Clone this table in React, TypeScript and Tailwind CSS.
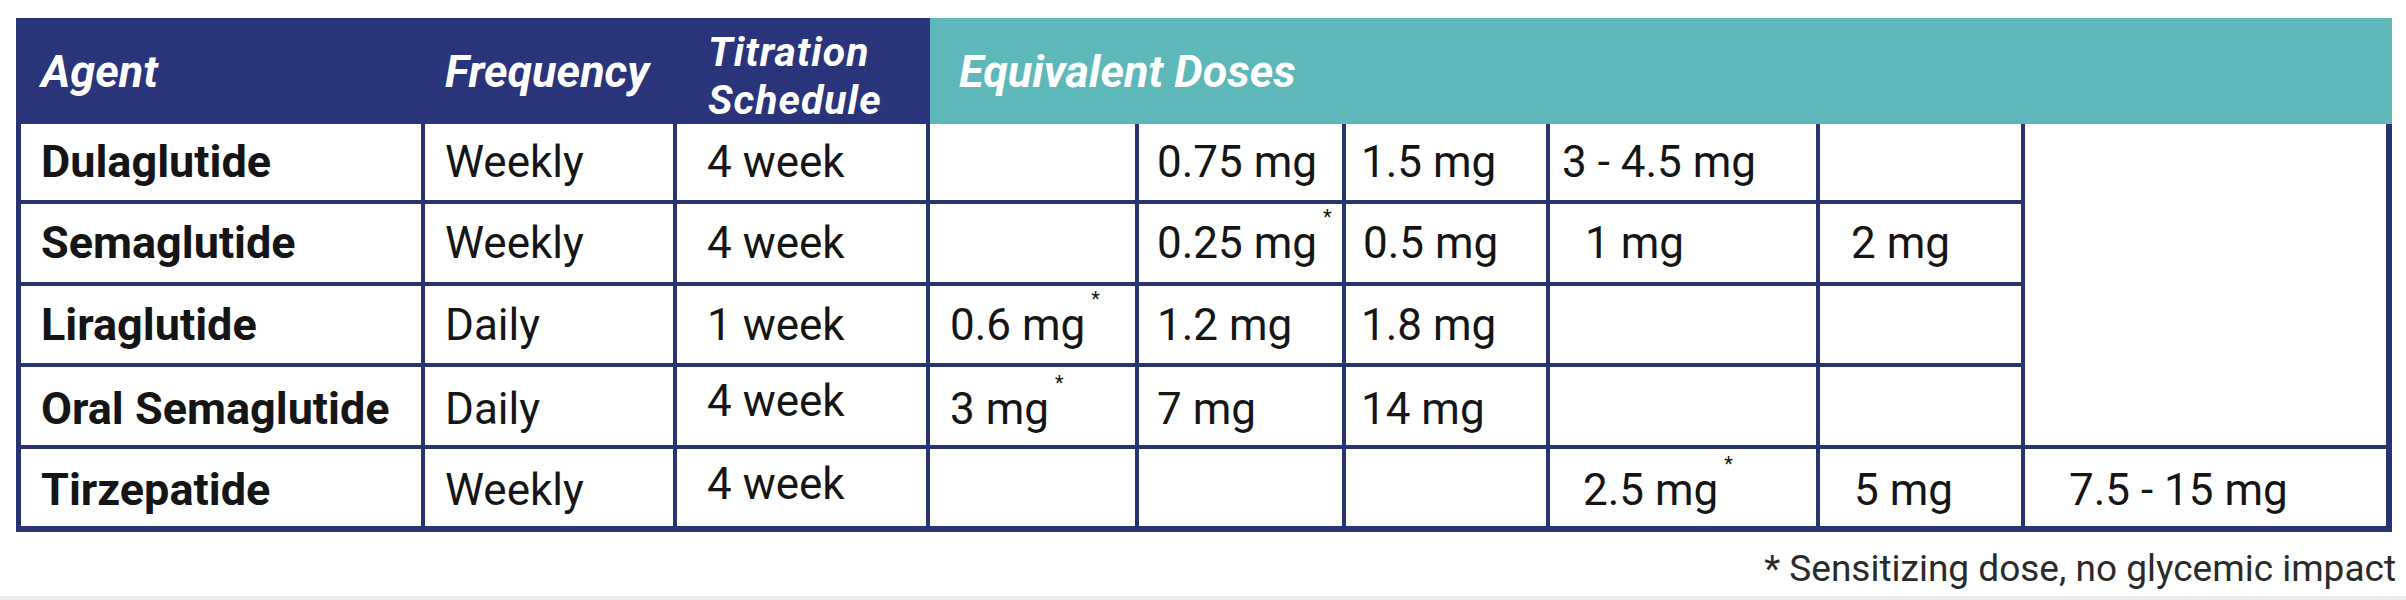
/**
 * GLP-1 agent dosing table - equivalent doses across agents
 */

type Dose = { text: string; star?: boolean; pad?: string }

type AgentRow = {
  agent: string
  frequency: string
  titration: string
  titrationShift?: string
  shift?: string
  doses: Dose[]
}

const rows: AgentRow[] = [
  {
    agent: 'Dulaglutide',
    frequency: 'Weekly',
    titration: '4 week',
    doses: [
      { text: '' },
      { text: '0.75 mg', pad: 'pl-[18px]' },
      { text: '1.5 mg', pad: 'pl-[15px]' },
      { text: '3 - 4.5 mg', pad: 'pl-[12px]' },
      { text: '' },
    ],
  },
  {
    agent: 'Semaglutide',
    frequency: 'Weekly',
    titration: '4 week',
    doses: [
      { text: '' },
      { text: '0.25 mg', star: true, pad: 'pl-[18px]' },
      { text: '0.5 mg', pad: 'pl-[17px]' },
      { text: '1 mg', pad: 'pl-[35px]' },
      { text: '2 mg', pad: 'pl-[31px]' },
    ],
  },
  {
    agent: 'Liraglutide',
    frequency: 'Daily',
    titration: '1 week',
    doses: [
      { text: '0.6 mg', star: true, pad: 'pl-[20px]' },
      { text: '1.2 mg', pad: 'pl-[18px]' },
      { text: '1.8 mg', pad: 'pl-[15px]' },
      { text: '' },
      { text: '' },
    ],
  },
  {
    agent: 'Oral Semaglutide',
    frequency: 'Daily',
    titration: '4 week',
    titrationShift: 'pb-[10px]',
    shift: 'pt-[6px]',
    doses: [
      { text: '3 mg', star: true, pad: 'pl-[20px]' },
      { text: '7 mg', pad: 'pl-[18px]' },
      { text: '14 mg', pad: 'pl-[15px]' },
      { text: '' },
      { text: '' },
    ],
  },
  {
    agent: 'Tirzepatide',
    frequency: 'Weekly',
    titration: '4 week',
    titrationShift: 'pb-[8px]',
    shift: 'pt-[4px]',
    doses: [
      { text: '' },
      { text: '' },
      { text: '' },
      { text: '2.5 mg', star: true, pad: 'pl-[33px]' },
      { text: '5 mg', pad: 'pl-[34px]' },
    ],
  },
]

function Star() {
  return <span className="relative -top-[26px] ml-[6px] text-[20px] leading-none">*</span>
}

function Cell({
  last,
  first,
  className = '',
  children,
}: {
  last: boolean
  first?: boolean
  className?: string
  children?: React.ReactNode
}) {
  const bottom = last ? 'border-b-[6px]' : 'border-b-[4px]'
  const left = first ? 'border-l-[5px]' : ''
  return (
    <div className={`flex items-center border-r-[4px] border-[#29336f] bg-white ${bottom} ${left} ${className}`}>
      {children}
    </div>
  )
}

export default function App() {
  return (
    <div className="flex h-[600px] w-[2406px] flex-col bg-white font-['Roboto','Liberation_Sans',sans-serif] text-[#151515]">
      <div className="ml-[16px] mt-[18px] grid w-[2376px] grid-cols-[409px_252px_253px_209px_207px_204px_270px_205px_367px] grid-rows-[106px_80px_82px_81px_82px_83px] text-[44px]">
        {/* header */}
        <div className="flex items-center bg-[#29347a] pl-[25px] pt-[2px] text-[45px] font-bold italic text-white">
          Agent
        </div>
        <div className="flex items-center bg-[#29347a] pl-[20px] pt-[2px] text-[45px] font-bold italic text-white">
          Frequency
        </div>
        <div className="flex flex-col justify-center bg-[#29347a] pl-[31px] pt-[10px] text-[41px] font-bold italic leading-[48px] tracking-[1px] text-white">
          <span>Titration</span>
          <span>Schedule</span>
        </div>
        <div className="col-span-6 flex items-center bg-[#5eb8b9] pl-[29px] pt-[2px] text-[45px] font-bold italic text-white">
          Equivalent Doses
        </div>

        {rows.map((row, i) => {
          const last = i === rows.length - 1
          const shift = row.shift ?? ''
          return [
            <Cell key={`${i}-a`} first last={last} className={`pl-[20px] text-[45px] font-bold ${shift}`}>
              {row.agent}
            </Cell>,
            <Cell key={`${i}-f`} last={last} className={`pl-[20px] ${shift}`}>
              {row.frequency}
            </Cell>,
            <Cell key={`${i}-t`} last={last} className={`pl-[30px] ${row.titrationShift ?? ''}`}>
              {row.titration}
            </Cell>,
            ...row.doses.map((d, j) => (
              <Cell key={`${i}-d${j}`} last={last} className={`${d.pad ?? ''} ${shift}`}>
                {d.text}
                {d.star && <Star />}
              </Cell>
            )),
            i === 0 ? (
              <div
                key="merged"
                className="row-span-4 border-b-[4px] border-r-[6px] border-[#29336f] bg-white"
              />
            ) : null,
            last ? (
              <Cell key="last-dose" last className={`border-r-[6px] pl-[44px] ${shift}`}>
                7.5 - 15 mg
              </Cell>
            ) : null,
          ]
        })}
      </div>

      <div className="mt-[18px] flex w-[2396px] justify-end text-[37px] leading-none text-[#2a2a2a]">
        * Sensitizing dose, no glycemic impact
      </div>

      <div className="mt-auto h-[4px] bg-[#ececec]" />
    </div>
  )
}
